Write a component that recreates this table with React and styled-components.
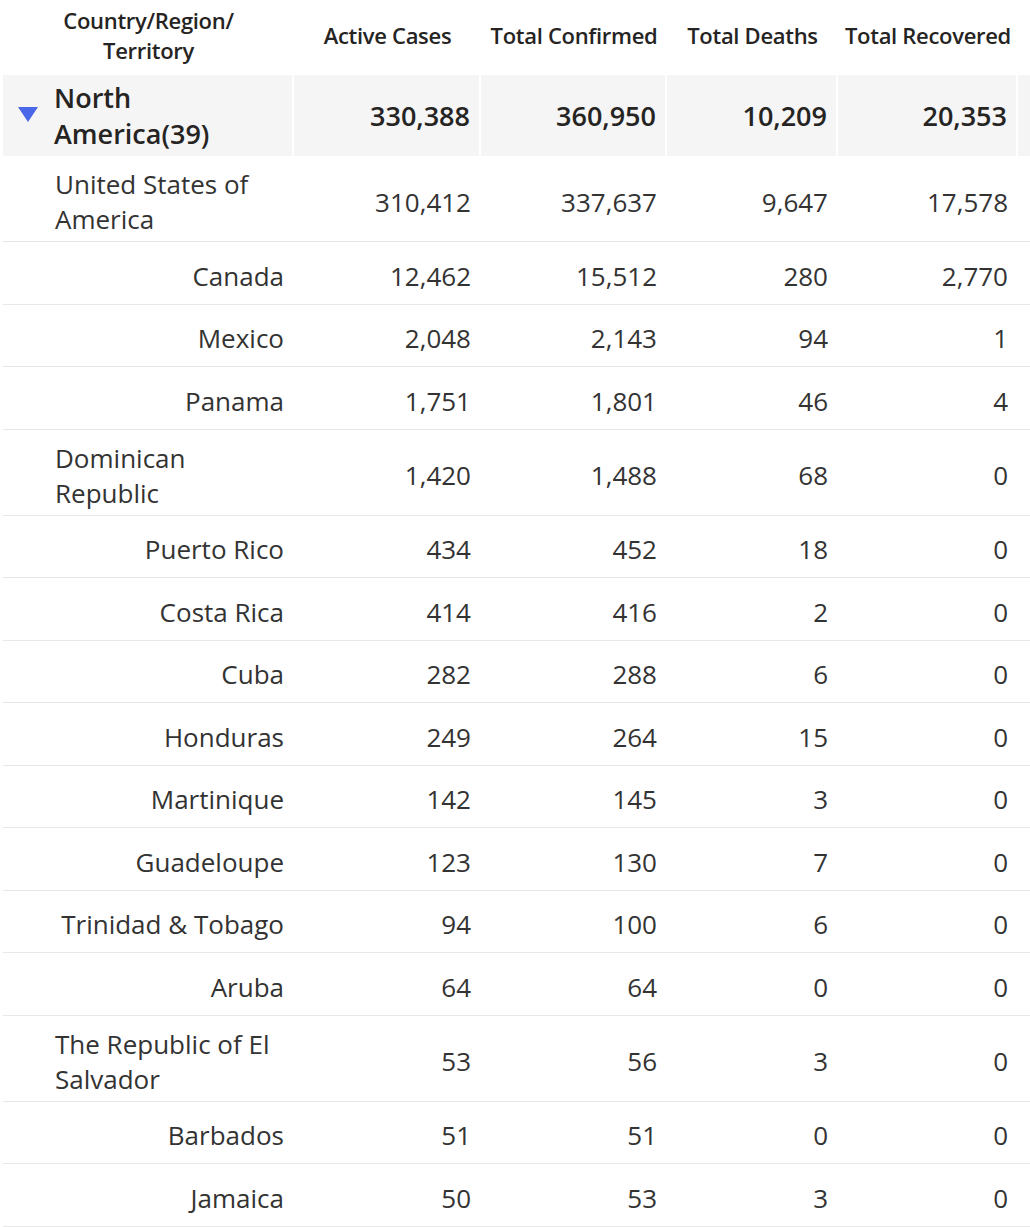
import React from 'react';
import styled, { createGlobalStyle } from 'styled-components';

const GlobalStyle = createGlobalStyle`
	html, body {
		margin: 0;
		padding: 0;
		background: #ffffff;
	}
	body {
		font-family: 'Open Sans', 'Noto Sans', sans-serif;
		color: #333333;
	}
`;

const COLUMNS = '291px 187px 186px 171px 180px 12px';

const Table = styled.div`
	width: 1027px;
	margin-left: 3px;
`;
const HeaderRow = styled.div`
	display: grid;
	grid-template-columns: ${COLUMNS};
	height: 75px;
`;
const HeaderCell = styled.div`
	display: flex;
	align-items: center;
	justify-content: center;
	text-align: center;
	padding-bottom: 6px;
	font-size: 22px;
	font-weight: 600;
	line-height: 30px;
	color: #252423;
	letter-spacing: -0.3px;
	white-space: nowrap;
`;
const GroupRow = styled.div`
	display: grid;
	grid-template-columns: ${COLUMNS};
	height: 81px;
`;
const GroupCell = styled.div`
	display: flex;
	align-items: center;
	justify-content: ${({ $left }) => ($left ? 'flex-start' : 'flex-end')};
	background: #f5f5f5;
	border-right: ${({ $last }) => ($last ? 'none' : '2px solid #ffffff')};
	padding: ${({ $left }) => ($left ? '0 0 0 15px' : '0 9px 0 0')};
	font-size: 27px;
	font-weight: 600;
	line-height: 36px;
	color: #252423;
`;
const Caret = styled.span`
	display: block;
	width: 0;
	height: 0;
	border-left: 10.5px solid transparent;
	border-right: 10.5px solid transparent;
	border-top: 15px solid #4a67e8;
	margin-right: 16px;
	margin-top: -2px;
`;
const Row = styled.div`
	display: grid;
	grid-template-columns: ${COLUMNS};
	min-height: 62.5px;
	border-bottom: 1px solid #e8e8e8;
	box-sizing: border-box;
`;
const NameCell = styled.div`
	display: flex;
	align-items: center;
	justify-content: ${({ $wrapped }) => ($wrapped ? 'flex-start' : 'flex-end')};
	padding: 11px 10px 4px 52px;
	font-size: 26px;
	line-height: 35px;
	white-space: nowrap;
`;
const NumCell = styled.div`
	display: flex;
	align-items: center;
	justify-content: flex-end;
	padding: 11px 10px 4px 0;
	font-size: 26px;
	line-height: 35px;
`;

const group = {
	name: ['North', 'America(39)'],
	values: ['330,388', '360,950', '10,209', '20,353'],
};

const rows = [
	{ name: ['United States of', 'America'], values: ['310,412', '337,637', '9,647', '17,578'] },
	{ name: ['Canada'], values: ['12,462', '15,512', '280', '2,770'] },
	{ name: ['Mexico'], values: ['2,048', '2,143', '94', '1'] },
	{ name: ['Panama'], values: ['1,751', '1,801', '46', '4'] },
	{ name: ['Dominican', 'Republic'], values: ['1,420', '1,488', '68', '0'] },
	{ name: ['Puerto Rico'], values: ['434', '452', '18', '0'] },
	{ name: ['Costa Rica'], values: ['414', '416', '2', '0'] },
	{ name: ['Cuba'], values: ['282', '288', '6', '0'] },
	{ name: ['Honduras'], values: ['249', '264', '15', '0'] },
	{ name: ['Martinique'], values: ['142', '145', '3', '0'] },
	{ name: ['Guadeloupe'], values: ['123', '130', '7', '0'] },
	{ name: ['Trinidad & Tobago'], values: ['94', '100', '6', '0'] },
	{ name: ['Aruba'], values: ['64', '64', '0', '0'] },
	{ name: ['The Republic of El', 'Salvador'], values: ['53', '56', '3', '0'] },
	{ name: ['Barbados'], values: ['51', '51', '0', '0'] },
	{ name: ['Jamaica'], values: ['50', '53', '3', '0'] },
];

const headers = ['Active Cases', 'Total Confirmed', 'Total Deaths', 'Total Recovered'];

const Lines = ({ lines }) =>
	lines.map((line, i) => (
		<React.Fragment key={i}>
			{i > 0 && <br />}
			{line}
		</React.Fragment>
	));

const App = () => (
	<>
		<GlobalStyle />
		<Table>
			<HeaderRow>
				<HeaderCell>
					Country/Region/
					<br />
					Territory
				</HeaderCell>
				{headers.map(h => (
					<HeaderCell key={h}>{h}</HeaderCell>
				))}
				<div />
			</HeaderRow>
			<GroupRow>
				<GroupCell $left>
					<Caret />
					<span>
						<Lines lines={group.name} />
					</span>
				</GroupCell>
				{group.values.map((v, i) => (
					<GroupCell key={i}>{v}</GroupCell>
				))}
				<GroupCell $last />
			</GroupRow>
			{rows.map(row => (
				<Row key={row.name.join(' ')}>
					<NameCell $wrapped={row.name.length > 1}>
						<span>
							<Lines lines={row.name} />
						</span>
					</NameCell>
					{row.values.map((v, i) => (
						<NumCell key={i}>{v}</NumCell>
					))}
					<div />
				</Row>
			))}
		</Table>
	</>
);

export default App;
